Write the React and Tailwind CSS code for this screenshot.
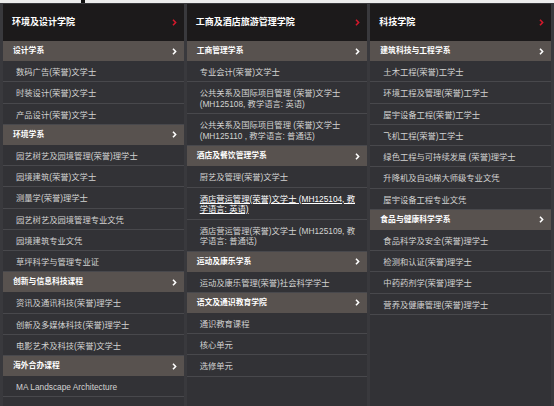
import React from "react";

const columns = [
  {
    title: "环境及设计学院",
    groups: [
      {
        name: "设计学系",
        items: ["数码广告(荣誉)文学士", "时装设计(荣誉)文学士", "产品设计(荣誉)文学士"],
      },
      {
        name: "环境学系",
        items: [
          "园艺树艺及园境管理(荣誉)理学士",
          "园境建筑(荣誉)文学士",
          "测量学(荣誉)理学士",
          "园艺树艺及园境管理专业文凭",
          "园境建筑专业文凭",
          "草坪科学与管理专业证",
        ],
      },
      {
        name: "创新与信息科技课程",
        items: ["资讯及通讯科技(荣誉)理学士", "创新及多媒体科技(荣誉)理学士", "电影艺术及科技(荣誉)文学士"],
      },
      { name: "海外合办课程", items: ["MA Landscape Architecture"] },
    ],
  },
  {
    title: "工商及酒店旅游管理学院",
    groups: [
      {
        name: "工商管理学系",
        items: [
          "专业会计(荣誉)文学士",
          ["公共关系及国际项目管理 (荣誉)文学士", "(MH125108, 教学语言: 英语)"],
          ["公共关系及国际项目管理 (荣誉)文学士", "(MH125110 , 教学语言: 普通话)"],
        ],
      },
      {
        name: "酒店及餐饮管理学系",
        items: [
          "厨艺及管理(荣誉)文学士",
          { lines: ["酒店营运管理(荣誉)文学士 (MH125104, 教", "学语言: 英语)"], link: true },
          ["酒店营运管理(荣誉)文学士 (MH125109, 教", "学语言: 普通话)"],
        ],
      },
      { name: "运动及康乐学系", items: ["运动及康乐管理(荣誉)社会科学学士"] },
      { name: "语文及通识教育学院", items: ["通识教育课程", "核心单元", "选修单元"] },
    ],
  },
  {
    title: "科技学院",
    groups: [
      {
        name: "建筑科技与工程学系",
        items: [
          "土木工程(荣誉)工学士",
          "环境工程及管理(荣誉)工学士",
          "屋宇设备工程(荣誉)工学士",
          "飞机工程(荣誉)工学士",
          "绿色工程与可持续发展 (荣誉)理学士",
          "升降机及自动梯大师级专业文凭",
          "屋宇设备工程专业文凭",
        ],
      },
      {
        name: "食品与健康科学学系",
        items: ["食品科学及安全(荣誉)理学士", "检测和认证(荣誉)理学士", "中药药剂学(荣誉)理学士", "营养及健康管理(荣誉)理学士"],
      },
    ],
  },
];

function Chevron({ color }) {
  return (
    <svg width="5" height="7" viewBox="0 0 5 7" className="shrink-0">
      <path d="M1 0.8l2.6 2.7L1 6.2" fill="none" stroke={color} strokeWidth="1.6" />
    </svg>
  );
}

function Item({ item }) {
  if (typeof item === "string") {
    return (
      <div className="border-b border-[#48484c] pl-[13px] pr-2 pt-[6px] pb-[4px] leading-[10.25px] text-[8.3px] text-[#d2d2d2]">
        {item}
      </div>
    );
  }
  const lines = Array.isArray(item) ? item : item.lines;
  const link = !Array.isArray(item) && item.link;
  return (
    <div
      className={
        "border-b border-[#48484c] pl-[13px] pr-2 pt-[6px] pb-[4px] leading-[10.5px] text-[8.3px] " +
        (link ? "text-white underline" : "text-[#d2d2d2]")
      }
    >
      {lines[0]}
      <br />
      {lines[1]}
    </div>
  );
}

export default function App() {
  return (
    <div
      className="w-[554px] h-[406px] flex flex-col bg-[#39393d] overflow-hidden"
      style={{ fontFamily: '"Liberation Sans", "Noto Sans CJK SC", sans-serif' }}
    >
      <div className="h-[3px] flex bg-[#ececec]">
        <div className="w-[81px]" />
        <div className="w-[4px] bg-[#111]" />
      </div>
      <div className="flex-1 grid grid-cols-3 gap-[3px] px-[3px] pt-[1px]">
        {columns.map((col) => (
          <div key={col.title} className="bg-[#323236] flex flex-col">
            <div className="h-[37px] bg-[#1c1a1b] flex items-center justify-between pl-[9px] pr-[7px]">
              <span className="text-[9px] font-bold text-white">{col.title}</span>
              <Chevron color="#d3182b" />
            </div>
            {col.groups.map((g) => (
              <div key={g.name}>
                <div className="h-[20px] bg-[#58524f] flex items-center justify-between pl-[10px] pr-[7px]">
                  <span className="text-[7.8px] font-bold text-white">{g.name}</span>
                  <Chevron color="#ffffff" />
                </div>
                {g.items.map((it, i) => (
                  <Item key={i} item={it} />
                ))}
              </div>
            ))}
          </div>
        ))}
      </div>
    </div>
  );
}
